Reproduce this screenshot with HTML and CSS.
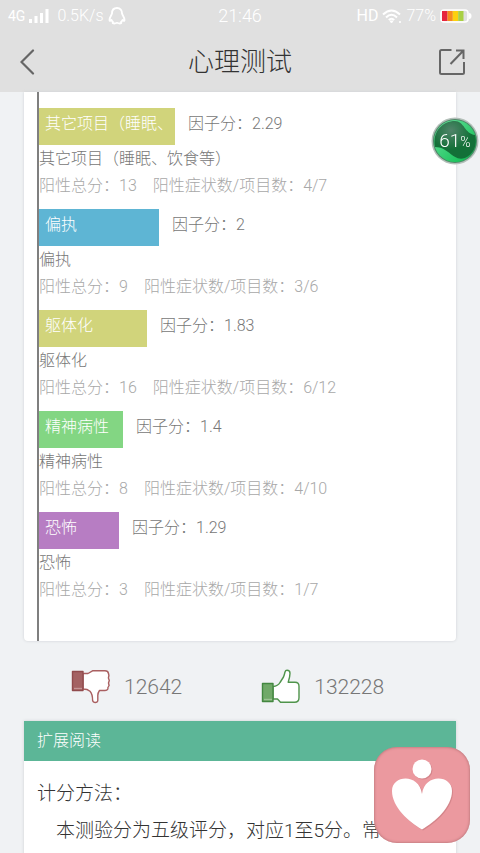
FILE: index.html
```html
<!DOCTYPE html>
<html lang="zh-CN">
<head>
<meta charset="utf-8">
<meta name="viewport" content="width=device-width, initial-scale=1">
<title>心理测试</title>
<link rel="stylesheet" href="styles.css">
</head>
<body>
<header class="top">
  <div class="status">
    <div class="status-side">
      <span class="network">4G</span>
      <svg class="signal" width="20" height="14" viewBox="0 0 20 14" fill="#fff"><path d="M0 10h3v4H0zM5.500 7h3v7h-3zM11 4h3v10h-3zM16.500 0h3v14h-3z"/></svg>
      <span class="speed">0.5K/s</span>
      <svg width="18" height="18" viewBox="0 0 18 18" fill="none" stroke="#fff" stroke-width="1.800" stroke-linejoin="round"><path d="M9 1C5.500 1 4 3.500 4 6.500 3.500 8.500 1.500 10 1.500 13c0 1.500 1 1 2 0 .3 1 .8 1.500 1.500 2-1.500 1.500 1.500 2 4 .8 2.500 1.200 5.500.7 4-.8.7-.5 1.200-1 1.500-2 1 1 2 1.500 2 0 0-3-2-4.500-2.500-6.500C14 3.500 12.500 1 9 1z"/></svg>
    </div>
    <time class="clock">21:46</time>
    <div class="status-side status-end">
      <span class="hd">HD</span>
      <svg width="20" height="15" viewBox="0 0 20 15" fill="none" stroke="#fff" stroke-width="2"><path d="M1 5.500Q9.500-2.500 18 5.500M4 8.500Q9.500 3 15 8.500M6.800 11Q9.500 8.500 12.200 11"/><path d="M8 12l1.500 2L11 12zM17.500 12.500h1v1h-1z" fill="#fff" stroke-width="1"/></svg>
      <span>77%</span>
      <svg width="32" height="14" viewBox="0 0 32 14"><rect x="1" y="1" width="27" height="12" rx="3" fill="none" stroke="#fff" stroke-width="1.600"/><path d="M29 4q2.500 0 2.500 3T29 10z" fill="#fff"/><path fill="#e6253f" d="M2 2h5.500v10H2z"/><path fill="#f68b1f" d="M7.500 2h5.300v10H7.500z"/><path fill="#fcd00f" d="M12.800 2h5.400v10h-5.400z"/><path fill="#a9d045" d="M18.200 2h5.300v10h-5.300z"/></svg>
    </div>
  </div>
  <nav class="bar">
    <button class="icon-btn" aria-label="返回"><svg width="16" height="28" viewBox="0 0 16 28" fill="none" stroke="#666" stroke-width="2.200" stroke-linecap="round"><path d="M13 2.500 1.500 14 13 25.500"/></svg></button>
    <h1 class="title">心理测试</h1>
    <button class="icon-btn icon-end" aria-label="分享"><svg width="28" height="28" viewBox="0 0 28 28" fill="none" stroke="#666" stroke-width="2"><path d="M13.500 2H3.500Q2 2 2 3.500v21Q2 26 3.500 26h21q1.500 0 1.500-1.500V14M18 2.500h7.500V11M25.500 2.500 12.500 16"/></svg></button>
  </nav>
</header>

<main class="page">
  <section class="card results">
    <ul class="factors">
      <li class="factor">
        <div class="factor-row"><span class="factor-bar olive" style="width:136px">其它项目（睡眠、</span><span>因子分：2.29</span></div>
        <p class="name">其它项目（睡眠、饮食等）</p>
        <p class="detail"><span>阳性总分：13</span><span>阳性症状数/项目数：4/7</span></p>
      </li>
      <li class="factor">
        <div class="factor-row"><span class="factor-bar blue" style="width:120px">偏执</span><span>因子分：2</span></div>
        <p class="name">偏执</p>
        <p class="detail"><span>阳性总分：9</span><span>阳性症状数/项目数：3/6</span></p>
      </li>
      <li class="factor">
        <div class="factor-row"><span class="factor-bar olive" style="width:108px">躯体化</span><span>因子分：1.83</span></div>
        <p class="name">躯体化</p>
        <p class="detail"><span>阳性总分：16</span><span>阳性症状数/项目数：6/12</span></p>
      </li>
      <li class="factor">
        <div class="factor-row"><span class="factor-bar green" style="width:84px">精神病性</span><span>因子分：1.4</span></div>
        <p class="name">精神病性</p>
        <p class="detail"><span>阳性总分：8</span><span>阳性症状数/项目数：4/10</span></p>
      </li>
      <li class="factor">
        <div class="factor-row"><span class="factor-bar purple" style="width:80px">恐怖</span><span>因子分：1.29</span></div>
        <p class="name">恐怖</p>
        <p class="detail"><span>阳性总分：3</span><span>阳性症状数/项目数：1/7</span></p>
      </li>
    </ul>
  </section>

  <div class="votes">
    <button class="vote" aria-label="踩 12642"><svg width="40" height="36" viewBox="0 0 40 36" stroke-width="1.400" stroke-linejoin="round"><path d="M12 4.500h5l4.500-2.700h12.500q3 0 3.500 2.700l.4 2-.5 2.500.9 2.500-.8 2.500.6 2.500-1.200 2v1.500q-.8 1.500-2.900 1.500h-5.500q-1.800 2.500-1.700 5v5q-.3 2-2.500 2t-2.700-2.200q0-6.300-2.600-9.100Q16.500 20 12 20z" fill="#fff" stroke="#a95f60"/><path d="M1.500 2.500H12v19H1.500z" fill="#a46263" stroke="#914b4d"/><path d="M3 19.500h8" stroke="#c69596" fill="none"/></svg><span>12642</span></button>
    <button class="vote" aria-label="赞 132228"><svg width="40" height="36" viewBox="0 0 40 36" stroke-width="1.400" stroke-linejoin="round"><path d="M12 17.500q5-.5 7-4l3.500-5.500q1-2.500 1.500-5 .5-1.700 2-1.700 3 0 3 3 0 3.500-1.800 9H34q4 0 4 4v11.500q0 4.500-4.500 4.500H19.500L16.500 30H12z" fill="#fff" stroke="#4f944b"/><path d="M1.500 14.500H12v18H1.500z" fill="#70a968" stroke="#438740"/><path d="M3 30.500h8" stroke="#9cc494" fill="none"/></svg><span>132228</span></button>
  </div>

  <section class="card reading">
    <h2 class="reading-title">扩展阅读</h2>
    <div class="reading-body">
      <p>计分方法：</p>
      <p class="indent">本测验分为五级评分，对应1至5分。常情</p>
    </div>
  </section>
</main>

<div class="memory"><span>61<small>%</small></span>
  <svg class="orb" viewBox="0 0 48 48"><defs><radialGradient id="dark" cx="40%" cy="25%"><stop offset="0" stop-color="#51846a"/><stop offset="1" stop-color="#137038"/></radialGradient><linearGradient id="wave" x2="1" y2="1"><stop offset="0" stop-color="#6ce5a1"/><stop offset="1" stop-color="#08b94b"/></linearGradient></defs><circle cx="24" cy="24" r="23.500" fill="#b3bfb9"/><circle cx="24" cy="24" r="22" fill="#4c8766"/><circle cx="24" cy="24" r="21" fill="url(#wave)"/><path d="M4 30C1 14 12 4 24 4c9 0 10 13 20 14 3 10-2 20-10 23-12 4-16-11-30-11z" fill="url(#dark)"/></svg>
</div>
<button class="assist" aria-label="心理助手"><svg viewBox="0 0 96 96"><g fill="#d4858a" transform="translate(1 1)"><circle cx="48" cy="22" r="9.500"/><path d="M48 82.500C35 75 18 60 18 44c0-16 27-18 30 3 3-21 30-19 30-3 0 16-17 31-30 38.500z"/></g><g fill="#fff"><circle cx="48" cy="22" r="9.500"/><path d="M48 82.500C35 75 18 60 18 44c0-16 27-18 30 3 3-21 30-19 30-3 0 16-17 31-30 38.500z"/></g></svg></button>
</body>
</html>
```
FILE: styles.css
```css
* { box-sizing: border-box; }

body {
  margin: 0;
  height: 100vh;
  overflow: hidden;
  background: #f0f2f4;
  color: #777;
  font: 300 16px/27px Roboto, "Noto Sans CJK SC", sans-serif;
}

h1, h2, p, ul { margin: 0; padding: 0; font-weight: 300; }
ul { list-style: none; }
button { border: 0; padding: 0; background: none; color: inherit; font: inherit; }
svg { display: block; flex: none; }

.top { background: #e0e0e0; }

.status {
  display: grid;
  grid-template-columns: 1fr auto 1fr;
  align-items: center;
  height: 32px;
  padding: 0 8px;
  color: #fff;
  line-height: 20px;
}
.status-side { display: flex; align-items: center; gap: 4px; }
.status-end { justify-content: flex-end; }
.network { font-size: 14px; font-weight: 400; }
.hd { font-weight: 400; }
.speed { margin-left: 4px; }
.clock { font-size: 18px; }

.bar {
  display: flex;
  align-items: center;
  justify-content: space-between;
  height: 60px;
  padding: 0 14px 0 20px;
}
.icon-btn { display: flex; width: 34px; }
.icon-end { width: 40px; justify-content: flex-end; }
.title { color: #333; font-size: 26px; line-height: 36px; }

.page { padding: 0 24px; }
.card { background: #fff; box-shadow: 0 0 3px #ccd0d3; }
.results { padding-left: 13px; border-radius: 0 0 4px 4px; }

.factors {
  display: flex;
  flex-direction: column;
  gap: 10px;
  padding: 16px 0 38px;
  border-left: 2px solid #7f7f7f;
}
.factor-row { display: flex; gap: 13px; height: 37px; line-height: 32px; }
.factor-bar { flex: none; padding-left: 6px; color: #fff; white-space: nowrap; }
.olive { background: #d1d47b; }
.blue { background: #5eb5d4; }
.green { background: #83d683; }
.purple { background: #b77dc3; }
.detail { display: flex; gap: 16px; color: #a8a8a8; }

.votes { display: flex; height: 80px; align-items: center; padding: 12px 47px 0; gap: 79px; }
.vote { display: flex; align-items: center; gap: 13px; font-size: 21px; }

.reading-title { padding: 0 13px; background: #5cb697; color: #fff; font-size: 16px; line-height: 40px; }
.reading-body { padding: 14px 13px 40px; color: #333; font-size: 19px; line-height: 37px; white-space: nowrap; overflow: hidden; }
.indent { text-indent: 1em; }

.memory {
  position: fixed;
  top: 117px;
  right: 1px;
  width: 48px;
  height: 48px;
  color: #fff;
  font-size: 19px;
  line-height: 48px;
  text-align: center;
}
.memory small { font-size: 14px; }
.memory span { position: relative; z-index: 1; }
.orb { position: absolute; inset: 0; }

.assist {
  position: fixed;
  right: 10px;
  bottom: 10px;
  width: 96px;
  height: 96px;
  border-radius: 23px;
  background: #eb999f;
  box-shadow: inset 0 0 3px #a56669;
}
```
